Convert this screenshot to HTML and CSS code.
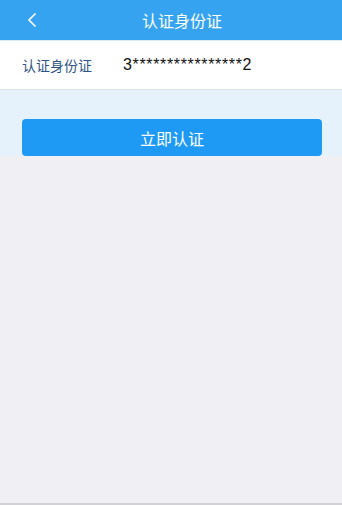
FILE: index.html
```html
<!DOCTYPE html>
<html>
<head>
<meta charset="utf-8">
<link rel="stylesheet" href="styles.css">
</head>
<body>
<div class="page">
  <header class="topbar">
    <span class="back">
      <svg width="10" height="16" viewBox="0 0 10 16"><path d="M8.5 1.5 L2 8 L8.5 14.5" fill="none" stroke="#fff" stroke-width="1.6"/></svg>
    </span>
    <h1 class="title">认证身份证</h1>
  </header>
  <div class="row">
    <span class="label">认证身份证</span>
    <span class="value">3****************2</span>
  </div>
  <div class="action">
    <button class="btn">立即认证</button>
  </div>
  <div class="rest"></div>
</div>
</body>
</html>
```
FILE: styles.css
```css
html, body { margin: 0; padding: 0; }
body {
  font-family: "Noto Sans CJK SC", "Liberation Sans", sans-serif;
  background: #efeff4;
}
.page {
  width: 342px;
  height: 505px;
  display: flex;
  flex-direction: column;
  background: #efeff4;
  border-bottom: 2px solid #d2d2d6;
  box-sizing: border-box;
}
.topbar {
  height: 40px;
  background: #36a3f1;
  display: flex;
  align-items: center;
  position: relative;
  border-bottom: 1px solid #d9ecfa;
}
.back {
  position: absolute;
  left: 27px;
  top: 12px;
  width: 10px;
  height: 16px;
  display: block;
}
.back svg { display: block; }
.title {
  margin: 0;
  flex: 1;
  text-align: center;
  padding-left: 22px;
  font-size: 16px;
  font-weight: normal;
  color: #fff;
  line-height: 40px;
}
.row {
  height: 48px;
  background: #fff;
  display: flex;
  align-items: center;
  padding-left: 22px;
  border-bottom: 1px solid #dde3ea;
}
.label {
  font-size: 14px;
  color: #2f5584;
  width: 101px;
}
.value {
  font-family: "Liberation Sans", sans-serif;
  font-size: 16px;
  letter-spacing: 0.65px;
  color: #111;
}
.action {
  background: #e6f2fb;
  padding: 29px 20px 0 22px;
  height: 37px;
}
.btn {
  display: block;
  width: 300px;
  height: 37px;
  border: none;
  border-radius: 4px;
  background: #1f9af4;
  color: #fff;
  font-family: "Noto Sans CJK SC", sans-serif;
  font-size: 16px;
  padding: 0;
}
.rest { flex: 1; }
```
